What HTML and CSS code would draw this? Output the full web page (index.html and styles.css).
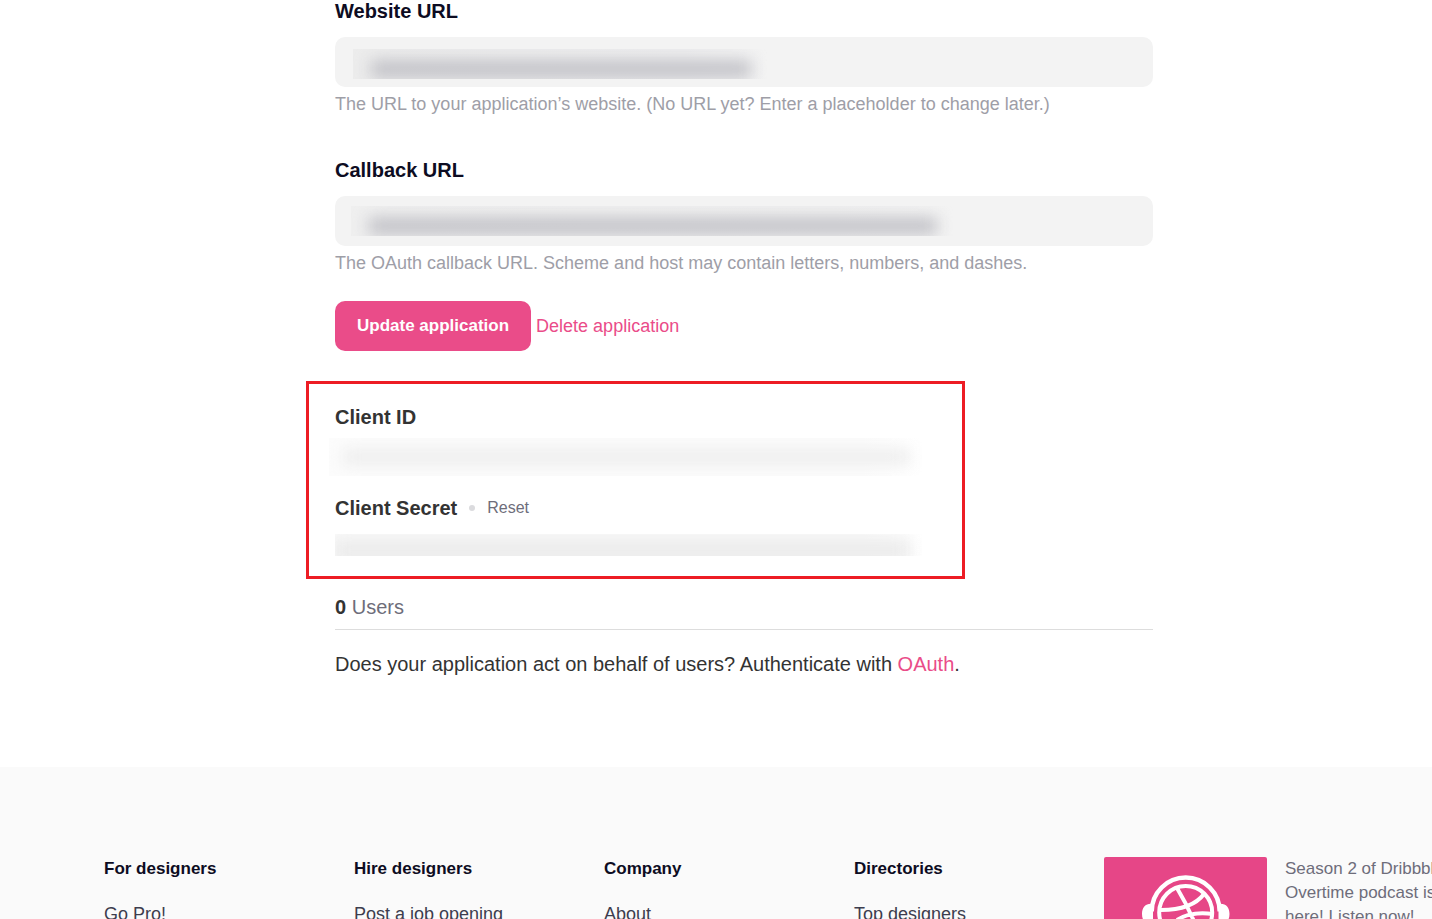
FILE: index.html
```html
<!DOCTYPE html>
<html lang="en">
<head>
<meta charset="utf-8">
<title>Edit application</title>
<link rel="stylesheet" href="styles.css">
</head>
<body>
<main class="content">
  <form class="app-form">
    <div class="field">
      <label for="website">Website URL</label>
      <div class="control">
        <input id="website" type="text">
        <span class="redacted redacted-website"><i></i></span>
      </div>
      <p class="hint">The URL to your application’s website. (No URL yet? Enter a placeholder to change later.)</p>
    </div>
    <div class="field">
      <label for="callback">Callback URL</label>
      <div class="control">
        <input id="callback" type="text">
        <span class="redacted redacted-callback"><i></i></span>
      </div>
      <p class="hint">The OAuth callback URL. Scheme and host may contain letters, numbers, and dashes.</p>
    </div>
    <div class="actions">
      <button type="button" class="update">Update application</button>
      <a href="#" class="delete">Delete application</a>
    </div>
  </form>
  <section class="credentials">
    <h2>Client ID</h2>
    <div class="secret secret-id"><i></i></div>
    <div class="secret-head">
      <h2>Client Secret</h2>
      <span class="dot"></span>
      <a href="#" class="reset">Reset</a>
    </div>
    <div class="secret secret-key"><i></i></div>
  </section>
  <h3 class="users"><strong>0</strong> Users</h3>
  <p class="note">Does your application act on behalf of users? Authenticate with <a href="#">OAuth</a>.</p>
</main>
<footer class="footer">
  <nav class="col"><h4>For designers</h4><a href="#">Go Pro!</a></nav>
  <nav class="col"><h4>Hire designers</h4><a href="#">Post a job opening</a></nav>
  <nav class="col"><h4>Company</h4><a href="#">About</a></nav>
  <nav class="col"><h4>Directories</h4><a href="#">Top designers</a></nav>
  <a href="#" class="podcast">
    <svg class="cover" viewBox="0 0 163 122" aria-hidden="true">
      <rect width="163" height="122" fill="#e64687"/>
      <g fill="none" stroke="#fff" stroke-width="4">
        <path d="M47.700 54.500a34 34 0 0 1 68 0" stroke-width="4.500"/>
        <circle cx="81.700" cy="55.500" r="26.500"/>
        <path d="M73 31q9 15 16 31t9 22M57 53q31 0 43-16M73 63q14-9 36-6"/>
      </g>
      <path d="M49 47c-7-1-11 3-11 10s4 11 11 10zM114.500 47c7-1 11 3 11 10s-4 11-11 10z" fill="#fff"/>
    </svg>
    <span class="blurb">Season 2 of Dribbble<br>Overtime podcast is<br>here! Listen now!</span>
  </a>
</footer>
</body>
</html>
```
FILE: styles.css
```css
* { box-sizing: border-box; }
html, body { height: 100%; }
body {
  margin: 0;
  overflow: hidden;
  background: #fff;
  color: #333;
  font-family: "Liberation Sans", Arial, sans-serif;
  font-size: 18px;
}
h2, h3, h4, p { margin: 0; }
a { color: #ea4c89; text-decoration: none; }
.content { padding: 0 279px 89px 335px; }
.field { margin-bottom: 43px; }
.field:nth-of-type(2) { margin-bottom: 25px; }
.field label {
  display: block;
  margin-bottom: 15px;
  color: #0d0c22;
  font-size: 20px;
  line-height: 22px;
  font-weight: bold;
}
.control { position: relative; height: 50px; }
.control input {
  width: 100%;
  height: 50px;
  padding: 0 20px;
  border: 0;
  border-radius: 10px;
  background: #f3f3f3;
  font: inherit;
}
.redacted {
  position: absolute;
  overflow: hidden;
  background: linear-gradient(90deg, #ececec, #eeeeef 80%, #f3f3f3);
}
.redacted i {
  position: absolute;
  inset: 12px 16px 2px 18px;
  background: #bebec4;
  filter: blur(8px);
}
.redacted-website { left: 18px; top: 12px; width: 414px; height: 30px; }
.redacted-callback { left: 16px; top: 10px; width: 602px; height: 30px; }
.redacted-callback { background: linear-gradient(90deg, #efefef, #f1f1f1 80%, #f3f3f3); }
.hint { margin-top: 5px; color: #9e9ea7; line-height: 25px; }
.field + .field { margin-top: -1px; }
.actions { display: flex; align-items: center; gap: 5px; margin-bottom: 30px; }
.update {
  height: 50px;
  padding: 0 22px;
  border: 0;
  border-radius: 10px;
  background: #ea4c89;
  color: #fff;
  font: bold 17px "Liberation Sans", Arial, sans-serif;
}
.credentials {
  max-width: 659px;
  margin-left: -29px;
  padding: 21px 26px 20px;
  border: 3px solid #ed1c24;
}
.credentials h2 { font-size: 20px; line-height: 24px; }
.secret { position: relative; overflow: hidden; margin-right: 14px; }
.secret i { position: absolute; background: #ebebeb; filter: blur(8px); }
.secret-id { height: 38px; margin-top: 9px; margin-left: -6px; background: linear-gradient(90deg, #fcfcfc 90%, #fff); }
.secret-id i { inset: 12px 12px 12px 14px; }
.secret-key { height: 22px; margin-top: 14px; background: linear-gradient(90deg, #fafafa 90%, #fff); }
.secret-key i { inset: 5px 12px -6px -2px; }
.secret-head { display: flex; align-items: center; margin-top: 20px; }
.dot { width: 6px; height: 6px; margin: 0 12px; border-radius: 50%; background: #dbdbde; }
.reset { color: #6e6d7a; font-size: 16px; }
.users {
  margin-top: 16px;
  padding-bottom: 10px;
  border-bottom: 1px solid #ddd;
  color: #6e6d7a;
  font-size: 20px;
  line-height: 24px;
  font-weight: normal;
}
.users strong { color: #333; }
.note { margin-top: 20px; font-size: 20px; line-height: 28px; }
.footer {
  display: grid;
  grid-template-columns: repeat(4, 250px) 1fr;
  padding: 90px 0 60px 104px;
  background: #fafafa;
  font-size: 17px;
  line-height: 24px;
}
.col h4 { margin-bottom: 21px; color: #0d0c22; font-size: 17px; }
.col a { color: #3d3d4e; font-size: 18px; }
.podcast { display: flex; gap: 18px; white-space: nowrap; color: #6e6d7a; }
.cover { flex: none; width: 163px; height: 122px; border-radius: 2px; }
```
